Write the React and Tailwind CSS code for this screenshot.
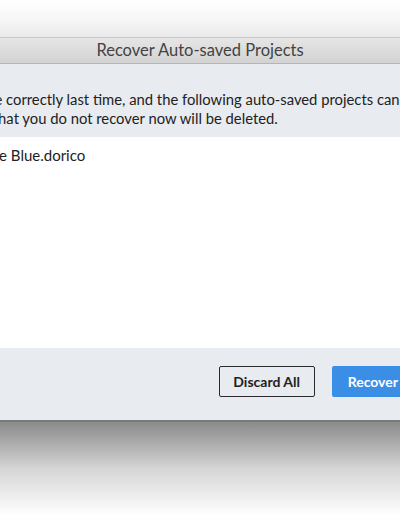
import React from 'react';

const font = { fontFamily: '"Lato", "Open Sans", sans-serif' };

export default function App() {
  return (
    <div className="w-[400px] h-[516px] overflow-hidden bg-white" style={font}>
      {/* backdrop above the sheet */}
      <div className="h-[37px] bg-gradient-to-b from-white via-[#f7f7f7] to-[#eaeaea]" />

      {/* dialog */}
      <div className="w-[400px] overflow-hidden">
        {/* title bar */}
        <div className="h-[27px] flex items-center justify-center border-t border-[#c9c9c9] border-b border-b-[#b5b5b5] bg-gradient-to-b from-[#e6e6e6] to-[#d3d3d3]">
          <span className="text-[16.5px] text-[#434343] whitespace-nowrap">Recover Auto-saved Projects</span>
        </div>

        <div className="bg-[#e8ebef] h-[356px] flex flex-col">
          {/* message */}
          <div className="pt-[26px] text-[14.8px] leading-[19px] text-[#222] whitespace-nowrap">
            <p className="-ml-[128px]">Dorico did not close correctly last time, and the following auto-saved projects can be recovered.</p>
            <p className="-ml-[92px]">Any projects that you do not recover now will be deleted.</p>
          </div>

          {/* project list */}
          <div className="mt-[9px] h-[211px] bg-white pt-[8px] text-[15px] leading-[20px] text-[#222] whitespace-nowrap">
            <div className="-ml-[26px]">Little Blue.dorico</div>
          </div>

          {/* buttons */}
          <div className="flex items-center justify-end gap-[17px] mt-[18px] -mr-[14px]">
            <button className="h-[31px] w-[96px] border border-[#2a2a2a] rounded-[2px] bg-transparent text-[14px] font-bold text-[#222]">
              Discard All
            </button>
            <button className="h-[31px] px-[16px] rounded-[2px] bg-[#3a8ee6] text-[14px] font-bold text-white">
              Recover
            </button>
          </div>
        </div>

        {/* sheet shadow */}
        <div className="h-[2px] bg-[#7a7a7a]" />
        <div className="h-[94px] bg-gradient-to-b from-[#8b8b8b] via-[#d6d6d6] to-white" />
      </div>
    </div>
  );
}
